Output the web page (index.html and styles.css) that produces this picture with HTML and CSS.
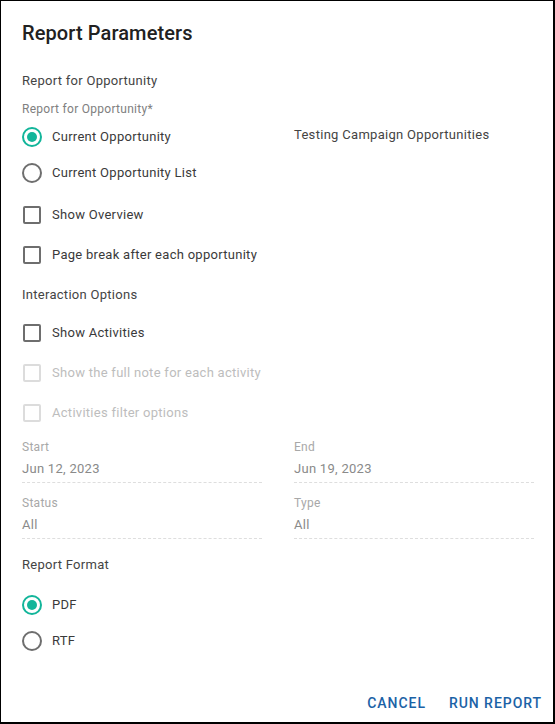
FILE: index.html
```html
<!DOCTYPE html>
<html>
<head>
<meta charset="utf-8">
<link rel="stylesheet" href="styles.css">
</head>
<body>
<div class="dialog">
  <h1 class="title">Report Parameters</h1>

  <div class="section-label">Report for Opportunity</div>
  <div class="field-caption">Report for Opportunity*</div>
  <div class="two-col">
    <div class="radio-group">
      <div class="radio-row"><span class="radio checked"></span><span class="opt">Current Opportunity</span></div>
      <div class="radio-row"><span class="radio"></span><span class="opt">Current Opportunity List</span></div>
    </div>
    <div class="side-text">Testing Campaign Opportunities</div>
  </div>

  <div class="check-group first">
    <div class="check-row"><span class="checkbox"></span><span class="opt">Show Overview</span></div>
    <div class="check-row"><span class="checkbox"></span><span class="opt">Page break after each opportunity</span></div>
  </div>

  <div class="section-label mid">Interaction Options</div>
  <div class="check-group">
    <div class="check-row"><span class="checkbox"></span><span class="opt">Show Activities</span></div>
    <div class="check-row disabled"><span class="checkbox"></span><span class="opt">Show the full note for each activity</span></div>
    <div class="check-row disabled"><span class="checkbox"></span><span class="opt">Activities filter options</span></div>
  </div>

  <div class="fields">
    <div class="field"><div class="f-label">Start</div><div class="f-value">Jun 12, 2023</div></div>
    <div class="field"><div class="f-label">End</div><div class="f-value">Jun 19, 2023</div></div>
    <div class="field"><div class="f-label">Status</div><div class="f-value">All</div></div>
    <div class="field"><div class="f-label">Type</div><div class="f-value">All</div></div>
  </div>

  <div class="section-label format">Report Format</div>
  <div class="radio-group format-group">
    <div class="radio-row"><span class="radio checked"></span><span class="opt">PDF</span></div>
    <div class="radio-row"><span class="radio"></span><span class="opt">RTF</span></div>
  </div>

  <div class="footer">
    <button class="btn">CANCEL</button>
    <button class="btn">RUN REPORT</button>
  </div>
</div>
</body>
</html>
```

FILE: styles.css
```css
* { box-sizing: border-box; }
html, body { margin: 0; padding: 0; background: #fff; }
body {
  width: 555px;
  height: 724px;
  border-style: solid;
  border-color: #000;
  border-width: 1px 2px 2px 1px;
  font-family: Roboto, "Liberation Sans", sans-serif;
  color: #333;
  overflow: hidden;
}
.dialog {
  height: 100%;
  display: flex;
  flex-direction: column;
  padding: 20px 19px 0 21px;
}
.title {
  margin: 0;
  font-size: 20px;
  font-weight: 500;
  line-height: 24px;
  height: 24px;
  color: #212121;
  letter-spacing: 0.1px;
}
.section-label {
  font-size: 13px;
  line-height: 20px;
  color: #444;
  margin-top: 26px;
  height: 20px;
  letter-spacing: 0.28px;
}
.section-label.mid { margin-top: 10px; margin-bottom: 8px; }
.section-label.format { margin-top: 1px; height: 26px; line-height: 26px; margin-bottom: 9px; }
.field-caption {
  margin-top: 10px;
  font-size: 12px;
  line-height: 16px;
  height: 16px;
  color: #808080;
  letter-spacing: 0.28px;
}
.two-col {
  display: grid;
  grid-template-columns: 240px 240px;
  column-gap: 32px;
  margin-top: 2px;
}
.side-text {
  font-size: 13px;
  line-height: 32px;
  color: #444;
  letter-spacing: 0.3px;
}
.radio-group { display: flex; flex-direction: column; }
.radio-row {
  height: 36px;
  display: flex;
  align-items: center;
  gap: 10px;
}
.radio {
  width: 20px;
  height: 20px;
  border-radius: 50%;
  border: 2px solid #6e6e6e;
  display: flex;
  align-items: center;
  justify-content: center;
  flex: none;
}
.radio.checked { border-color: #12b59a; }
.radio.checked::after {
  content: "";
  width: 10px;
  height: 10px;
  border-radius: 50%;
  background: #12b59a;
}
.opt { font-size: 13px; color: #3a3a3a; line-height: 20px; letter-spacing: 0.28px; }
.check-group { display: flex; flex-direction: column; }
.check-group.first { margin-top: 4px; }
.check-row {
  height: 40px;
  display: flex;
  align-items: center;
  gap: 11px;
  padding-left: 1px;
}
.checkbox {
  width: 18px;
  height: 18px;
  border: 2px solid #6e6e6e;
  border-radius: 2px;
  flex: none;
}
.check-row.disabled .checkbox { border-color: #dcdcdc; }
.check-row.disabled .opt { color: #bdbdbd; }
.fields {
  display: grid;
  grid-template-columns: 240px 240px;
  column-gap: 32px;
  margin-top: 6px;
}
.field { height: 56px; }
.f-label {
  font-size: 12px;
  line-height: 16px;
  color: #a8a8a8;
  letter-spacing: 0.28px;
}
.f-value {
  margin-top: 4px;
  font-size: 13px;
  line-height: 20px;
  color: #8a8a8a;
  padding-bottom: 3px;
  border-bottom: 1px dashed #dedede;
  letter-spacing: 0.28px;
}
.footer {
  margin-top: auto;
  display: flex;
  justify-content: flex-end;
  gap: 7px;
  padding: 0 0 1px 0;
  margin-right: -16px;
}
.btn {
  height: 36px;
  padding: 0 8px;
  border: none;
  background: transparent;
  font-family: Roboto, "Liberation Sans", sans-serif;
  font-size: 14px;
  font-weight: 500;
  letter-spacing: 0.95px;
  color: #1b62a6;
  cursor: pointer;
}
```
